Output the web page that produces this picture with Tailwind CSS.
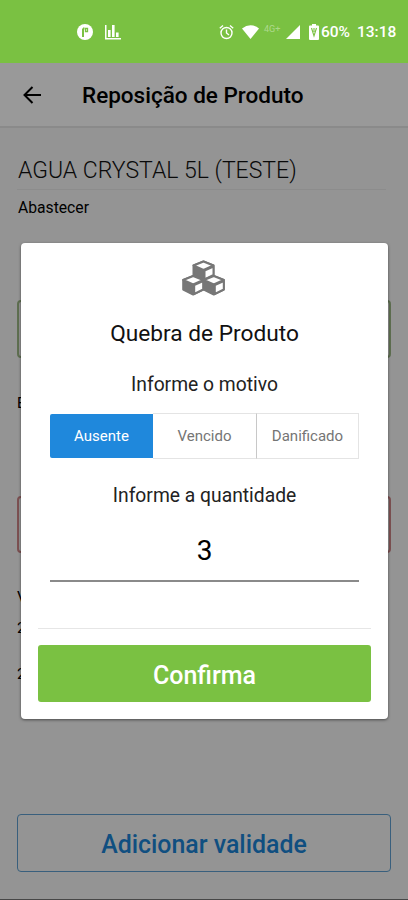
<!DOCTYPE html>
<html lang="pt-BR">
<head>
<meta charset="UTF-8">
<meta name="viewport" content="width=device-width, initial-scale=1.0">
<title>Reposição de Produto</title>
<script src="https://cdn.jsdelivr.net/npm/@tailwindcss/browser@4"></script>
</head>
<body class="bg-[#f7f7f7] font-[Roboto,sans-serif] text-black">
<div class="relative flex flex-col w-[408px] h-[900px] overflow-hidden">

    <!-- status bar -->
    <div class="flex items-center h-[63px] shrink-0 bg-[#7ac142] pl-[77px] pr-[11px] text-white">
        <svg class="w-4 h-4" viewBox="0 0 16 16"><circle cx="8" cy="8" r="8" fill="#fff"/><path d="M6 13V4.500M6 4.500h1.500" fill="none" stroke="#7ac142" stroke-width="2"/><path d="M8.500 4.500h2v3h-2z" fill="none" stroke="#7ac142" stroke-width="1.300"/></svg>
        <svg class="w-4 h-4 ml-3" viewBox="0 0 16 16" fill="#fff"><path d="M0 1h1.500v13H16v1.500H0zM3 6h2.600v7H3zM7 1h2.600v12H7zM11 8.500h2.600v4.500H11z"/></svg>
        <svg class="w-[15px] h-4 ml-auto" viewBox="0 0 15 16" fill="none" stroke="#fff" stroke-width="1.4"><circle cx="7.500" cy="9" r="5.500"/><path d="M7.500 5.500V9l2.500 2M.8 4.200L4 1.500M14.200 4.200L11 1.500"/></svg>
        <svg class="w-[17px] h-4 ml-2" viewBox="0 0 17 16" fill="#fff"><path d="M0 4.500Q8.500-2 17 4.500L8.500 15z"/></svg>
        <span class="ml-[5px] mb-1 w-[18px] text-[9px] leading-none text-white/40">4G+</span>
        <svg class="w-[14px] h-4 ml-[4px]" viewBox="0 0 14 16" fill="#fff"><path d="M14 1v14H0z"/></svg>
        <svg class="w-[10px] h-4 ml-[9px]" viewBox="0 0 10 16"><path d="M3 0h4v1.500h2q1 0 1 1V15q0 1-1 1H1q-1 0-1-1V2.500q0-1 1-1h2z" fill="#fff"/><path d="M2.500 4l2.500 8 2.500-8M5 4v4" fill="none" stroke="#7ac142" stroke-width="1.100"/></svg>
        <span class="ml-[2px] mt-[3px] w-[30px] text-[15.500px] leading-none font-medium">60%</span>
        <span class="ml-[6px] mt-[3px] w-[40px] text-[15.500px] leading-none font-medium">13:18</span>
    </div>

    <div class="relative flex flex-col grow">
        <!-- header -->
        <div class="flex items-center h-[65px] shrink-0 bg-white border-b-2 border-[#e6e6e6] pl-[23px]">
            <svg class="w-[19px] h-[18px]" viewBox="0 0 19 18" fill="none" stroke="#000" stroke-width="2"><path d="M18 9H1.500M9.500 1L1.500 9l8 8"/></svg>
            <h1 class="ml-[40px] mt-[3px] text-[22.500px] font-medium whitespace-nowrap">Reposição de Produto</h1>
        </div>

        <div class="flex flex-col grow px-[17px]">
            <p class="mt-[26px] ml-px text-[23px] leading-[34px] font-light text-[#111] whitespace-nowrap">AGUA CRYSTAL 5L (TESTE)</p>
            <div class="h-px mt-px mr-[5px] bg-[#e9e9e9]"></div>
            <p class="mt-[8px] ml-px text-[15.700px] leading-5 whitespace-nowrap">Abastecer</p>
            <div class="h-[58px] mt-[82px] shrink-0 rounded-[4px] border-2 border-[#9dba86]"></div>
            <p class="mt-[35px] text-[15px] leading-5">E</p>
            <div class="h-[57px] mt-[83px] shrink-0 rounded-[4px] border-2 border-[#cf8588]"></div>
            <p class="mt-[34px] text-[15.500px] leading-5">V</p>
            <p class="mt-[11px] text-[15.500px] leading-5">2</p>
            <p class="mt-[26px] text-[15.500px] leading-5">2</p>
            <button class="h-[58px] mt-auto mb-[27px] pt-[4px] shrink-0 rounded-[4px] border-[1.500px] border-[#5f9fd0] text-[24.900px] font-medium text-[#1b84d6]">Adicionar validade</button>
        </div>
        <div class="h-[1px] bg-[#777]"></div>

        <div class="absolute inset-0 bg-black/40"></div>
    </div>

    <!-- modal -->
    <div class="absolute left-[21px] top-[243px] w-[367px] h-[476px] flex flex-col rounded-[4px] bg-white shadow-[0_1px_3px_rgba(0,0,0,0.5)] px-[17px]">
        <svg class="w-[43px] h-[36px] mt-[17px] ml-[144px]" viewBox="0 0 43 36" stroke="#777" stroke-width="2" stroke-linejoin="round">
            <g id="cube"><path d="M11.500 5.500l10-4 10 4V15l-10 5-10-5z" fill="#777"/><path d="M11.500 5.500l10-4 10 4-10 4.500z" fill="#fff"/><path d="M22.500 10.500l9-4V15l-9 4.300z" fill="#fff"/></g>
            <use href="#cube" x="-10.300" y="14.500"/>
            <use href="#cube" x="10.300" y="14.500"/>
        </svg>
        <h2 class="mt-[23px] text-center text-[22.700px] leading-[30px] text-[#111]">Quebra de Produto</h2>
        <p class="mt-[24px] text-center text-[19.300px] leading-6 text-[#222]">Informe o motivo</p>
        <div class="grid grid-cols-3 h-[46px] mt-[16px] mx-[12px] shrink-0 text-[15px]">
            <div class="flex items-center justify-center h-[44px] mt-px pt-px bg-[#1f88dc] text-white rounded-l-[2px]">Ausente</div>
            <div class="flex items-center justify-center pt-px border-y border-[#e4e4e4] text-[#757575]">Vencido</div>
            <div class="flex items-center justify-center pt-px border border-[#e4e4e4] border-l-[#c8c8c8] text-[#757575]">Danificado</div>
        </div>
        <p class="mt-[25px] text-center text-[19.300px] leading-6 text-[#222]">Informe a quantidade</p>
        <div class="flex items-center justify-center h-[74px] pt-[13px] mx-[12px] shrink-0 border-b-2 border-[#8a8a8a] text-[28px]">3</div>
        <div class="h-px mt-[46px] shrink-0 bg-[#e6e6e6]"></div>
        <button class="h-[57px] mt-[16px] pt-[4px] shrink-0 rounded-[3px] bg-[#7ac142] text-white text-[25px] font-medium">Confirma</button>
    </div>
</div>
</body>
</html>
